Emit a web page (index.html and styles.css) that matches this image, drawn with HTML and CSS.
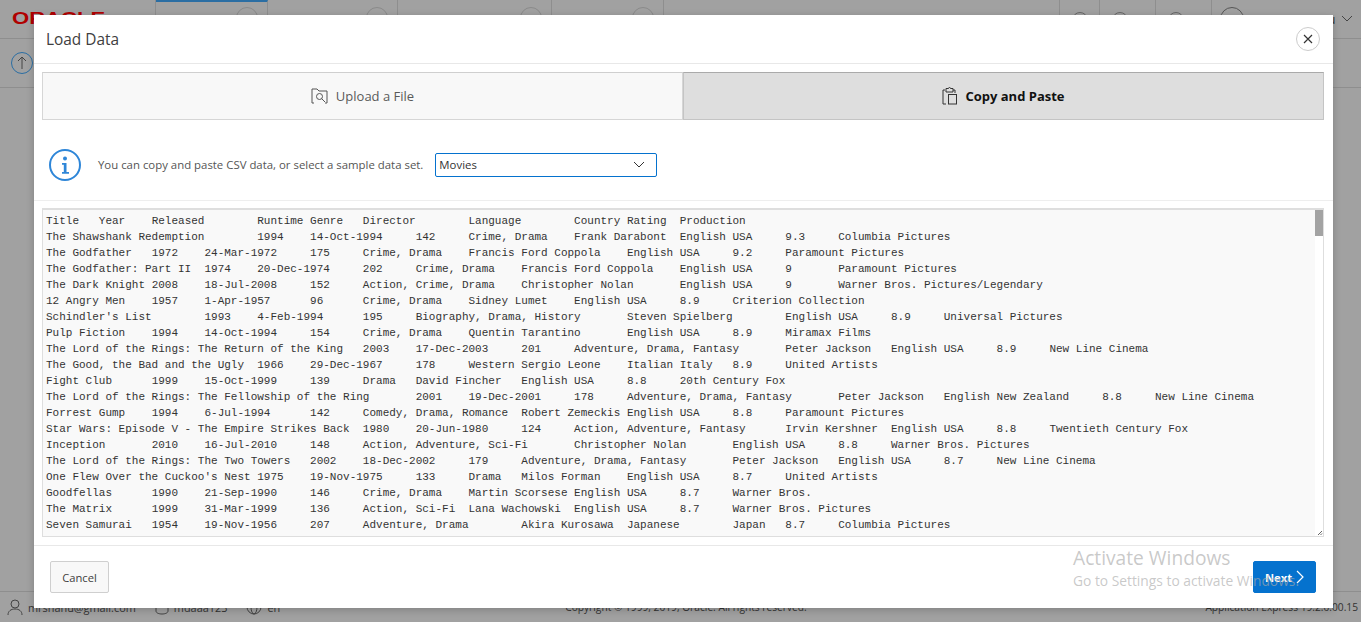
FILE: index.html
```html
<!DOCTYPE html>
<html>
<head>
  <meta charset="UTF-8">
  <title>Load Data</title>
  <link rel="stylesheet" href="styles.css">
</head>
<body>
  <!-- Page behind the dialog -->
  <div class="page">
    <div class="topbar">
      <div class="logo"><span class="logo-text">ORACLE</span></div>
      <div class="nav">
        <div class="nav-item nav-active w112"><span class="nav-icon"></span></div>
        <div class="nav-item w130"><span class="nav-icon"></span></div>
        <div class="nav-item w154"><span class="nav-icon"></span></div>
        <div class="nav-item w112"><span class="nav-icon"></span></div>
      </div>
      <div class="tools">
        <div class="tool w40"><span class="tool-icon"></span></div>
        <div class="tool w56"><span class="tool-icon"></span></div>
        <div class="tool w56"><span class="tool-icon"></span></div>
        <div class="tool user">
          <span class="avatar"></span>
          <span class="user-name">u</span>
          <svg class="user-arrow" width="12" height="8" viewBox="0 0 12 8"><path d="M1 1l5 5 5-5" fill="none" stroke="#444"/></svg>
        </div>
      </div>
    </div>
    <div class="subbar">
      <span class="up-btn">
        <svg width="14" height="14" viewBox="0 0 14 14"><path d="M7 13V1M3 5l4-4 4 4" fill="none" stroke="#444"/></svg>
      </span>
    </div>
    <div class="main"></div>
    <div class="footer">
      <div class="foot-left">
        <span class="foot-item">
          <svg width="16" height="16" viewBox="0 0 16 16"><circle cx="8" cy="5" r="4" fill="none" stroke="#444"/><path d="M1 16c0-4 3-6 7-6s7 2 7 6" fill="none" stroke="#444"/></svg>
          mrshanu@gmail.com
        </span>
        <span class="foot-item">
          <svg width="14" height="16" viewBox="0 0 14 16"><ellipse cx="7" cy="4" rx="6" ry="3" fill="none" stroke="#444"/><path d="M1 4v8c0 2 3 3 6 3s6-1 6-3V4" fill="none" stroke="#444"/></svg>
          mdaaa123
        </span>
        <span class="foot-item">
          <svg width="16" height="16" viewBox="0 0 16 16"><circle cx="8" cy="8" r="7" fill="none" stroke="#444"/><ellipse cx="8" cy="8" rx="3" ry="7" fill="none" stroke="#444"/></svg>
          en
        </span>
      </div>
      <div class="foot-copy">Copyright © 1999, 2019, Oracle. All rights reserved.</div>
      <div class="foot-version">Application Express 19.2.0.00.15</div>
    </div>
  </div>

  <!-- Load Data dialog -->
  <div class="dialog">
    <div class="dialog-head">
      <h1>Load Data</h1>
      <button class="close-btn" aria-label="Close">
        <svg width="10" height="10" viewBox="0 0 10 10"><path d="M1 1l8 8M9 1l-8 8" fill="none" stroke="#333" stroke-width="1.2"/></svg>
      </button>
    </div>

    <div class="tabs">
      <div class="tab">
        <svg width="17" height="16" viewBox="0 0 17 16"><path d="M3 15H1V1h5l2 2h8v12h-2" fill="none" stroke="#555"/><circle cx="8.5" cy="8.5" r="3" fill="none" stroke="#555"/><path d="M10.5 10.5l3.5 3.5" stroke="#555"/></svg>
        Upload a File
      </div>
      <div class="tab tab-active">
        <svg width="15" height="18" viewBox="0 0 15 18"><path d="M4 17H1V3h2M11 3h2v3" fill="none" stroke="#333"/><path d="M4 1.5h2.5a1 1 0 0 1 2 0H11V5H4z" fill="none" stroke="#333"/><rect x="6.5" y="7.5" width="8" height="9.5" fill="none" stroke="#333"/></svg>
        Copy and Paste
      </div>
    </div>

    <div class="info">
      <svg class="info-icon" width="32" height="32" viewBox="0 0 32 32">
        <circle cx="16" cy="16" r="15" fill="#fff" stroke="#2e86d8" stroke-width="2"/>
        <circle cx="16" cy="9.5" r="2" fill="#2e86d8"/>
        <path d="M13 14h4.5v9H20v1.8h-7V23h1.8v-7.2H13z" fill="#2e86d8"/>
      </svg>
      <span class="info-text">You can copy and paste CSV data, or select a sample data set.</span>
      <div class="select">
        <span>Movies</span>
        <svg width="12" height="8" viewBox="0 0 12 8"><path d="M1 1l5 5 5-5" fill="none" stroke="#333"/></svg>
      </div>
    </div>

    <div class="paste-wrap">
      <div class="paste-box">
<pre class="paste-text">Title	Year	Released	Runtime	Genre	Director	Language	Country	Rating	Production
The Shawshank Redemption	1994	14-Oct-1994	142	Crime, Drama	Frank Darabont	English	USA	9.3	Columbia Pictures
The Godfather	1972	24-Mar-1972	175	Crime, Drama	Francis Ford Coppola	English	USA	9.2	Paramount Pictures
The Godfather: Part II	1974	20-Dec-1974	202	Crime, Drama	Francis Ford Coppola	English	USA	9	Paramount Pictures
The Dark Knight	2008	18-Jul-2008	152	Action, Crime, Drama	Christopher Nolan	English	USA	9	Warner Bros. Pictures/Legendary
12 Angry Men	1957	1-Apr-1957	96	Crime, Drama	Sidney Lumet	English	USA	8.9	Criterion Collection
Schindler's List	1993	4-Feb-1994	195	Biography, Drama, History	Steven Spielberg	English	USA	8.9	Universal Pictures
Pulp Fiction	1994	14-Oct-1994	154	Crime, Drama	Quentin Tarantino	English	USA	8.9	Miramax Films
The Lord of the Rings: The Return of the King	2003	17-Dec-2003	201	Adventure, Drama, Fantasy	Peter Jackson	English	USA	8.9	New Line Cinema
The Good, the Bad and the Ugly	1966	29-Dec-1967	178	Western	Sergio Leone	Italian	Italy	8.9	United Artists
Fight Club	1999	15-Oct-1999	139	Drama	David Fincher	English	USA	8.8	20th Century Fox
The Lord of the Rings: The Fellowship of the Ring	2001	19-Dec-2001	178	Adventure, Drama, Fantasy	Peter Jackson	English	New Zealand	8.8	New Line Cinema
Forrest Gump	1994	6-Jul-1994	142	Comedy, Drama, Romance	Robert Zemeckis	English	USA	8.8	Paramount Pictures
Star Wars: Episode V - The Empire Strikes Back	1980	20-Jun-1980	124	Action, Adventure, Fantasy	Irvin Kershner	English	USA	8.8	Twentieth Century Fox
Inception	2010	16-Jul-2010	148	Action, Adventure, Sci-Fi	Christopher Nolan	English	USA	8.8	Warner Bros. Pictures
The Lord of the Rings: The Two Towers	2002	18-Dec-2002	179	Adventure, Drama, Fantasy	Peter Jackson	English	USA	8.7	New Line Cinema
One Flew Over the Cuckoo's Nest	1975	19-Nov-1975	133	Drama	Milos Forman	English	USA	8.7	United Artists
Goodfellas	1990	21-Sep-1990	146	Crime, Drama	Martin Scorsese	English	USA	8.7	Warner Bros.
The Matrix	1999	31-Mar-1999	136	Action, Sci-Fi	Lana Wachowski	English	USA	8.7	Warner Bros. Pictures
Seven Samurai	1954	19-Nov-1956	207	Adventure, Drama	Akira Kurosawa	Japanese	Japan	8.7	Columbia Pictures</pre>
        <div class="scroll-track">
          <div class="scroll-thumb"></div>
          <svg class="resize-grip" width="8" height="8" viewBox="0 0 8 8"><path d="M7 3L3 7M7 5.5L5.5 7" stroke="#666"/></svg>
        </div>
      </div>
    </div>

    <div class="dialog-foot">
      <button class="btn">Cancel</button>
      <button class="btn btn-primary">
        Next
        <svg width="8" height="14" viewBox="0 0 8 14"><path d="M1 1l6 6-6 6" fill="none" stroke="#fff" stroke-width="1.2"/></svg>
      </button>
    </div>
  </div>

  <!-- Windows watermark sits on top of everything -->
  <div class="watermark">
    <div class="wm-title">Activate Windows</div>
    <div class="wm-sub">Go to Settings to activate Windows.</div>
  </div>
</body>
</html>
```

FILE: styles.css
```css
html, body {
  margin: 0;
  padding: 0;
  height: 100%;
  overflow: hidden;
}
body {
  font-family: "Open Sans", Arial, sans-serif;
  background: #a1a1a1;
  color: #333;
}
.page {
  display: flex;
  flex-direction: column;
  height: 100%;
}

/* top bar */
.topbar {
  display: flex;
  height: 38px;
  border-bottom: 1px solid #8e8e8e;
}
.logo {
  width: 155px;
  box-sizing: border-box;
  padding: 10px 0 0 12px;
  font: bold 16px/18px "Liberation Sans", Arial, sans-serif;
  color: #b00000;
}
.logo-text {
  display: inline-block;
  transform: scaleX(1.38);
  transform-origin: left;
}
.nav {
  display: flex;
  flex: 1;
  border-left: 1px solid #8e8e8e;
}
.nav-item {
  display: flex;
  justify-content: flex-end;
  box-sizing: border-box;
  padding: 7px 9px 0 0;
  border-right: 1px solid #8e8e8e;
}
.nav-active {
  border-top: 2px solid #2b6ea3;
  padding-top: 5px;
}
.w112 { width: 112px; }
.w130 { width: 130px; }
.w154 { width: 154px; }
.nav-icon {
  width: 20px;
  height: 20px;
  border: 1px solid #8a8a8a;
  border-radius: 50%;
}
.tools {
  display: flex;
  width: 302px;
}
.tool {
  display: flex;
  box-sizing: border-box;
  padding: 12px 0 0 12px;
  border-left: 1px solid #8e8e8e;
}
.w40 { width: 40px; }
.w56 { width: 56px; }
.tool-icon {
  width: 14px;
  height: 14px;
  border: 1px solid #666;
  border-radius: 50%;
}
.user {
  flex: 1;
  align-items: flex-start;
  padding: 7px 0 0 8px;
}
.avatar {
  width: 22px;
  height: 22px;
  border: 1px solid #555;
  border-radius: 50%;
}
.user-name {
  margin-left: 84px;
  margin-top: 4px;
  font-size: 12px;
}
.user-arrow {
  margin: 8px 0 0 6px;
}
.subbar {
  display: flex;
  align-items: center;
  height: 48px;
  padding-left: 11px;
  border-bottom: 1px solid #8e8e8e;
}
.up-btn {
  display: flex;
  align-items: center;
  justify-content: center;
  width: 20px;
  height: 20px;
  border: 1px solid #2b6ea3;
  border-radius: 50%;
}
.main {
  flex: 1;
}
.footer {
  display: flex;
  align-items: center;
  height: 31px;
  padding: 0 3px 0 7px;
  border-top: 1px solid #8e8e8e;
  box-sizing: border-box;
  font-size: 10.2px;
  color: #333;
}
.foot-left {
  display: flex;
  gap: 19px;
  font-size: 10.9px;
}
.foot-item {
  display: flex;
  align-items: center;
  gap: 5px;
}
.foot-copy {
  margin-left: 285px;
}
.foot-version {
  margin-left: auto;
}

/* dialog */
.dialog {
  position: absolute;
  left: 34px;
  top: 15px;
  width: 1299px;
  height: 593px;
  display: flex;
  flex-direction: column;
  background: #fff;
  box-shadow: 0 2px 8px rgba(0, 0, 0, 0.2);
}
.dialog-head {
  display: flex;
  align-items: center;
  justify-content: space-between;
  height: 48px;
  padding: 0 13px 0 12px;
  border-bottom: 1px solid #e8e8e8;
}
.dialog-head h1 {
  margin: 0;
  font-size: 15.4px;
  font-weight: 400;
  color: #404040;
}
.close-btn {
  display: flex;
  align-items: center;
  justify-content: center;
  width: 24px;
  height: 24px;
  padding: 0;
  background: #fff;
  border: 1px solid #ccc;
  border-radius: 50%;
}
.tabs {
  display: flex;
  margin: 8px 9px 0 8px;
  height: 48px;
}
.tab {
  flex: 1;
  display: flex;
  align-items: center;
  justify-content: center;
  gap: 8px;
  font-size: 13px;
  color: #5a5a5a;
  background: #f8f8f8;
  border: 1px solid #d6d6d6;
  border-top-color: #cfcfcf;
}
.tab-active {
  background: #dedede;
  border-color: #c4c4c4;
  border-top-color: #aaa;
  color: #111;
  font-weight: 700;
}
.info {
  display: flex;
  align-items: center;
  height: 71px;
  padding: 9px 0 0 15px;
  border-bottom: 1px solid #eee;
}
.info-text {
  margin-left: 17px;
  font-size: 11.4px;
  color: #555;
}
.select {
  display: flex;
  align-items: center;
  justify-content: space-between;
  box-sizing: border-box;
  width: 222px;
  height: 24px;
  margin-left: 12px;
  padding: 0 11px 0 3px;
  border: 1px solid #0572ce;
  border-radius: 2px;
  font-size: 11.4px;
  color: #333;
}
.paste-wrap {
  padding: 7px 9px 0 8px;
}
.paste-box {
  display: flex;
  height: 329px;
  box-sizing: border-box;
  background: #f9f9f9;
  border: 1px solid #dedede;
  border-top-width: 2px;
}
.paste-text {
  flex: 1;
  margin: 0;
  padding: 3px 3px 0;
  overflow: hidden;
  font: 11px/16px "Liberation Mono", "DejaVu Sans Mono", monospace;
  tab-size: 8;
  color: #333;
}
.scroll-track {
  display: flex;
  flex-direction: column;
  justify-content: space-between;
  align-items: flex-end;
  width: 8px;
  background: #fff;
}
.scroll-thumb {
  width: 8px;
  height: 26px;
  background: #a3a3a3;
}
.resize-grip {
  display: block;
}
.dialog-foot {
  display: flex;
  align-items: center;
  justify-content: space-between;
  margin-top: 8px;
  padding: 0 17px 0 16px;
  flex: 1;
  border-top: 1px solid #e8e8e8;
}
.btn {
  width: 59px;
  height: 32px;
  padding: 0;
  font-family: inherit;
  font-size: 11.2px;
  color: #404040;
  background: #f8f8f8;
  border: 1px solid #cfcfcf;
  border-radius: 2px;
}
.btn-primary {
  display: flex;
  align-items: center;
  justify-content: center;
  gap: 4px;
  width: 63px;
  font-weight: 700;
  color: #fff;
  background: #0572ce;
  border-color: #0572ce;
}

/* watermark */
.watermark {
  position: absolute;
  left: 1073px;
  top: 545px;
  color: rgba(170, 170, 170, 0.64);
  pointer-events: none;
  white-space: nowrap;
}
.wm-title {
  font-size: 19.2px;
  line-height: 26px;
}
.wm-sub {
  font-size: 13.8px;
  line-height: 19px;
}
```
